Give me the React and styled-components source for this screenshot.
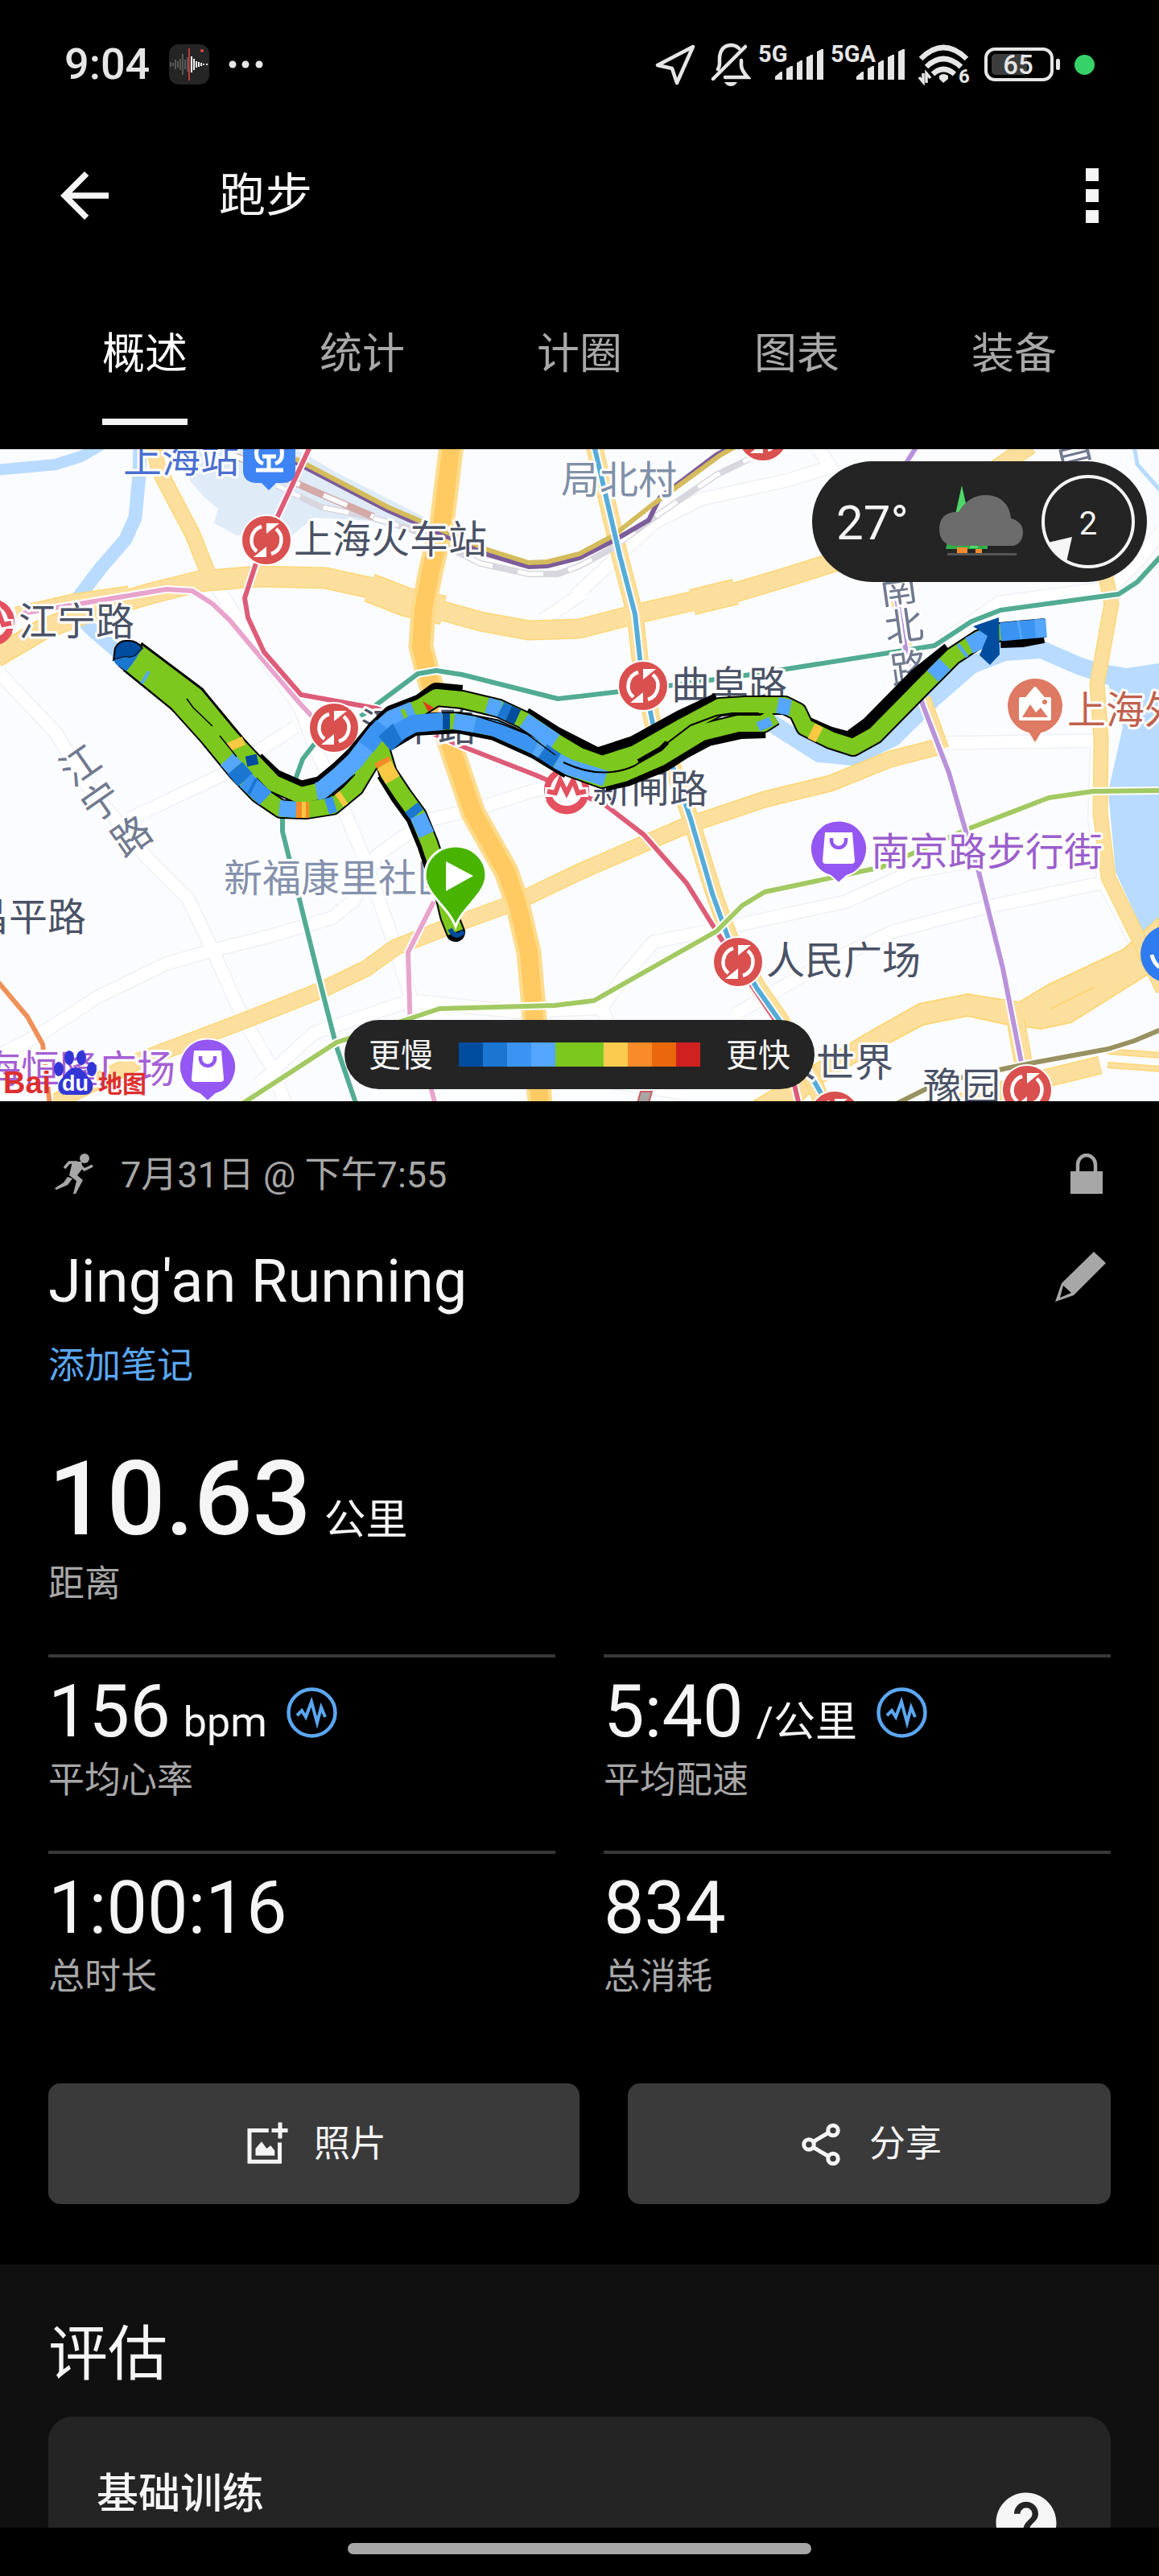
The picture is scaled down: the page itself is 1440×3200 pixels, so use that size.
import React, { useState } from 'react'
import styled, { createGlobalStyle } from 'styled-components'
import { MdArrowBack, MdHelp } from 'react-icons/md'

const GlobalStyle = createGlobalStyle`
  * {
    box-sizing: border-box;
  }
  body {
    margin: 0;
    background: #000;
    color: #f5f5f5;
    font-family: Roboto, 'Noto Sans CJK SC', sans-serif;
  }
  button {
    border: none;
    background: none;
    color: inherit;
    font: inherit;
    padding: 0;
    cursor: pointer;
  }
  svg {
    display: block;
    flex-shrink: 0;
  }
`;

const Screen = styled.div`
  height: 100vh;
  display: flex;
  flex-direction: column;
  background: #000;
`;

const Content = styled.main`
  flex: 1;
  min-height: 0;
  overflow-y: auto;
  scrollbar-width: none;
`;

/* status bar */

const StatusBar = styled.div`
  height: 160px;
  flex-shrink: 0;
  display: flex;
  align-items: center;
  justify-content: space-between;
  padding: 0 80px;
  color: #e6e6e6;
`;

const StatusGroup = styled.div`
  display: flex;
  align-items: center;
  gap: ${({ $gap }) => $gap}px;
`;

const Clock = styled.span`
  font-size: 54px;
  font-weight: 500;
  line-height: 60px;
`;

/* header */

const Header = styled.header`
  height: 166px;
  flex-shrink: 0;
  display: flex;
  align-items: center;
  padding: 0 60px;
`;

const HeaderTitle = styled.h1`
  flex: 1;
  margin: 0 0 0 122px;
  font-size: 58px;
  font-weight: 400;
  line-height: 70px;
`;

const IconButton = styled.button`
  display: flex;
  align-items: center;
  justify-content: center;
`;

const Tabs = styled.nav`
  display: flex;
  justify-content: space-around;
  flex-shrink: 0;
  padding: 0 45px 30px;
`;

const Tab = styled.button`
  height: 202px;
  padding-top: 34px;
  font-size: 53px;
  line-height: 60px;
  color: ${({ $active }) => ($active ? '#fff' : '#a8a8a8')};
  border-bottom: 8px solid ${({ $active }) => ($active ? '#f5f5f5' : 'transparent')};
`;

/* map */

const MapWrap = styled.section`
  position: relative;
  overflow: hidden;
`;

const MapSvg = styled.svg`
  width: 100%;
  height: auto;
  background: #fafcff;
`;

const MapText = styled.text`
  font-family: 'Noto Sans CJK SC', sans-serif;
  font-size: 48px;
  font-weight: 400;
  fill: ${({ $color }) => $color};
  stroke: #fff;
  stroke-width: 6px;
  stroke-linejoin: round;
  paint-order: stroke;
`;

const LogoText = styled.text`
  font-family: 'Liberation Sans', 'Noto Sans CJK SC', sans-serif;
  font-weight: 700;
  font-size: ${({ $size }) => $size}px;
  fill: ${({ $color }) => $color};
`;

const Weather = styled.div`
  position: absolute;
  top: 15px;
  right: 15px;
  height: 150px;
  display: flex;
  align-items: center;
  padding: 0 15px 0 30px;
  border-radius: 75px;
  background: #242424;
`;

const Temperature = styled.span`
  width: 128px;
  padding-top: 4px;
  font-size: 60px;
  line-height: 70px;
`;

const WindText = styled.text`
  font-size: 40px;
  fill: #f5f5f5;
`;

const Legend = styled.div`
  position: absolute;
  bottom: 15px;
  left: 50%;
  transform: translateX(-50%);
  height: 86px;
  display: flex;
  align-items: center;
  gap: 32px;
  padding: 0 30px;
  border-radius: 43px;
  background: #242424;
  font-size: 40px;
  line-height: 50px;
  white-space: nowrap;
`;

const LegendLabel = styled.span`
  padding-top: 4px;
`;

const LegendBar = styled.div`
  display: flex;
`;

const LegendCell = styled.span`
  width: 30px;
  height: 30px;
  background: ${({ $color }) => $color};
`;

/* activity */

const Activity = styled.section`
  padding: 60px 60px 75px;
`;

const Row = styled.div`
  display: flex;
  align-items: center;
  justify-content: space-between;
`;

const Meta = styled(Row)`
  height: 60px;
  padding: 0 10px 0 8px;
  color: #a7a7a7;
`;

const DateText = styled.span`
  flex: 1;
  margin-left: 34px;
  padding-top: 4px;
  font-size: 45px;
  line-height: 60px;
`;

const Name = styled.h2`
  margin: 0;
  padding-top: 2px;
  font-size: 74px;
  font-weight: 400;
  line-height: 88px;
`;

const NameRow = styled(Row)`
  align-items: flex-start;
  margin-top: 58px;
  padding-right: 6px;
`;

const EditButton = styled(IconButton)`
  height: 80px;
`;

const NoteLink = styled.a`
  display: block;
  margin-top: 31px;
  width: fit-content;
  font-size: 45px;
  line-height: 60px;
  color: #5ba7f2;
  text-decoration: none;
`;

const Distance = styled.div`
  margin: 60px 0 58px;
`;

const Figures = styled.div`
  display: flex;
  align-items: baseline;
  gap: 16px;
`;

const Value = styled.span`
  font-size: ${({ $big }) => ($big ? 128 : 90)}px;
  line-height: ${({ $big }) => ($big ? 150 : 108)}px;
  font-weight: ${({ $big }) => ($big ? 500 : 400)};
`;

const Unit = styled.span`
  font-size: 52px;
  line-height: 60px;
`;

const Label = styled.div`
  padding-top: 2px;
  font-size: 45px;
  line-height: 58px;
  color: #a7a7a7;
`;

const Stats = styled.div`
  display: grid;
  grid-template-columns: 1fr 1fr;
  gap: 58px 60px;
`;

const Stat = styled.div`
  border-top: 4px solid #383838;
  padding-top: 14px;
`;

const StatTop = styled.div`
  display: flex;
  align-items: center;
  gap: 24px;
`;

const Actions = styled.div`
  display: grid;
  grid-template-columns: 11fr 10fr;
  gap: 60px;
  margin-top: 103px;
`;

const ActionButton = styled.button`
  height: 150px;
  display: flex;
  align-items: center;
  justify-content: center;
  gap: 30px;
  padding-top: 2px;
  border-radius: 15px;
  background: #3a3a3a;
  font-size: 45px;
  line-height: 60px;
`;

/* evaluation */

const Evaluation = styled.section`
  padding: 67px 60px 60px;
  background: #101010;
`;

const SectionTitle = styled.h2`
  margin: 0 0 32px;
  font-size: 74px;
  font-weight: 400;
  line-height: 90px;
`;

const Card = styled.div`
  min-height: 264px;
  display: flex;
  align-items: center;
  justify-content: space-between;
  padding: 62px 60px;
  border-radius: 30px;
  background: #242424;
`;

const CardTitle = styled.h3`
  align-self: flex-start;
  margin: 0;
  font-size: 52px;
  font-weight: 500;
  line-height: 70px;
`;

const GestureBar = styled.footer`
  height: 60px;
  flex-shrink: 0;
  display: flex;
  align-items: center;
  justify-content: center;
  padding-bottom: 8px;
  background: #000;
`;

const Handle = styled.span`
  width: 40%;
  height: 14px;
  border-radius: 7px;
  background: #a7a7a7;
`;

const tabs = ['概述', '统计', '计圈', '图表', '装备'];

const DARK = '#004c9e';
const DEEP = '#1b76d2';
const MID = '#3b94f2';
const SKY = '#54a6ff';
const GREEN = '#7dc81e';
const YELLOW = '#fbc844';
const ORANGE = '#f98b28';

const paceColors = [DARK, DEEP, MID, SKY, GREEN, GREEN, '#fbcb50', ORANGE, '#ea670c', '#d02020'];

const stats = [
  { id: 1, value: '156', unit: 'bpm', label: '平均心率', chart: true },
  { id: 2, value: '5:40', unit: '/公里', label: '平均配速', chart: true },
  { id: 3, value: '1:00:16', label: '总时长' },
  { id: 4, value: '834', label: '总消耗' },
];

// map geometry, 1440 x 810
const streets = [
  '0,279 69,352 110,419 184,509 234,559 264,622 303,709 340,772 355,815',
  '271,174 321,249 372,319 395,379 422,435 450,502 482,592 510,679 516,720',
  '724,411 660,425 597,445 528,462 468,505 440,560 413,582 335,605 266,622 207,639 124,679 46,729 -5,755',
  '161,459 275,405 367,345',
  '320,790 390,725 510,685 643,699 748,694 775,655 812,612 913,592 1051,562 1133,525 1225,509',
  '913,702 1018,642 1110,599 1225,569 1367,539',
  '1170,365 1363,362 1360,459 1372,539 1409,609',
  '715,182 812,92 871,62 977,39 1032,22 1014,-5',
  '675,212 725,178',
  '1170,240 1243,190 1381,172 1413,140 1445,100',
  '748,694 765,740',
  '720,780 850,800',
];

const roads = [
  { w: 17, d: '190,-5 197,25 220,69 239,105 259,155' },
  { w: 24, d: '-5,258 51,225 110,202 188,179 248,164 321,158 404,160 459,172 505,194' },
  { w: 12, d: '20,203 90,187 160,177' },
  { w: 34, d: '459,172 505,190 551,200' },
  { w: 22, d: '540,198 597,214 657,225 720,223 793,204 881,184 917,177 977,159 1050,136' },
  { w: 30, d: '860,190 914,177' },
  { w: 20, d: '1230,30 1280,-5' },
  { w: 18, d: '60,815 174,759 298,712 399,672 455,645 491,619 560,592 643,562 720,525 849,469 950,435 1032,415 1106,385 1165,370' },
  { w: 16, d: '1372,150 1381,192 1372,242 1363,292 1368,359 1367,452 1377,532 1413,605 1445,672' },
  { w: 20, d: '1262,710 1272,765' },
  { w: 12, d: '1149,309 1172,372' },
  { w: 20, d: '1367,765 1285,785 1180,815' },
  { w: 5, d: '1376,748 1445,753' },
  { w: 5, d: '1376,765 1445,770' },
  { w: 18, d: '738,-5 770,132 789,205 796,269 812,345 835,392 858,459 887,552 906,605 942,669 970,709 1014,792 1022,815' },
  { w: 10, d: '1113,185 1128,252' },
];

const metro = [
  { c: '#52ab93', d: '448,332 519,279 542,275 574,280 693,310 720,307 830,294 940,279 1161,244 1207,214 1243,200 1390,180 1413,165 1445,130' },
  { c: '#52ab93', d: '415,345 390,367 376,385 351,455 351,475 367,539 395,652 418,742 443,815' },
  { c: '#e8a4cd', d: '28,204 207,174 239,176 264,192 285,212 321,255 372,315 395,340' },
  { c: '#e8a4cd', d: '539,562 507,625 510,725' },
  { c: '#e8a4cd', d: '532,780 541,815' },
  { c: '#dd5c78', d: '386,-5 347,79 317,145 304,185 308,209 328,252 374,305 468,322 528,349 574,369 666,405 752,442 800,479 853,539 894,605 936,669 963,709 980,760 993,815' },
  { c: '#55acd8', d: '738,-5 770,132 789,205 796,269 812,345 835,392 858,459 885,552 904,605 940,669 968,709 1020,800' },
  { c: '#a2c962', d: '298,815 418,737 510,707 546,695 689,691 738,685 890,599 922,567 950,550 1096,519 1202,472 1303,433 1358,425 1445,424' },
  { c: '#b992db', d: '1140,-5 1124,20' },
  { c: '#b992db', d: '1113,180 1126,252 1147,319 1179,402 1200,475 1216,525 1246,645 1269,762' },
  { c: '#ee9058', d: '-3,661 34,705 53,739 62,815' },
  { c: '#989262', d: '1110,815 1152,794 1188,782 1285,762 1377,745 1409,735 1445,720' },
];

const laneNorth = '161,251 202,278 239,307 275,347 317,391 340,415 374,430 399,424 422,405 441,387 468,352 487,335 523,320 542,308 574,311 620,322 652,337 690,363 720,381 748,391 789,378 849,344 894,320 927,318 975,318 991,326 1000,345 1032,361 1060,370 1087,355 1147,294 1184,257 1216,236 1243,227 1299,222';
const laneSouth = '154,260 220,314 257,355 294,400 321,428 349,447 381,448 413,443 441,420 468,375 482,359 514,340 569,338 615,347 666,370 707,395 748,410 775,403 821,383 872,352 917,341 948,341 962,332';
const laneSpur = '473,372 482,402 500,429 519,455 533,489 545,525 558,580 566,600';
const westBand = '157,275 225,330 281,389 302,414 338,402 302,362 250,299 177,244';

const paces = [
  { c: SKY, w: 4, d: '185,276 176,291' },
  { c: YELLOW, d: '284,370 303,362', w: 11 },
  { c: SKY, d: '282,385 292,396', w: 22 },
  { c: DEEP, d: '292,396 305,411', w: 24 },
  { c: MID, d: '305,411 330,434', w: 22 },
  { c: DEEP, w: 4, d: '318,410 309,428' },
  { c: DARK, d: '306,388 320,385', w: 13 },
  { c: SKY, d: '347,446 368,448' },
  { c: ORANGE, d: '368,448 375,448' },
  { c: YELLOW, d: '375,448 380,448' },
  { c: ORANGE, d: '380,448 384,448' },
  { c: MID, d: '406,444 416,441' },
  { c: YELLOW, d: '421,436 427,432' },
  { c: SKY, d: '393,425 399,424 422,405 441,387 468,352 487,335 514,324', w: 22 },
  { c: MID, d: '455,370 476,343', w: 22 },
  { c: GREEN, w: 5, d: '500,323 508,342' },
  { c: DEEP, d: '478,366 496,350', w: 24 },
  { c: MID, d: '494,352 514,341 550,338', w: 22 },
  { c: SKY, d: '605,318 622,323' },
  { c: DEEP, d: '622,323 632,328' },
  { c: DARK, d: '632,328 643,333' },
  { c: SKY, d: '651,337 690,363' },
  { c: DARK, d: '550,338 559,338' },
  { c: SKY, d: '564,338 590,342' },
  { c: MID, d: '590,342 615,347 666,370' },
  { c: SKY, d: '666,370 674,375' },
  { c: DEEP, d: '674,375 692,387' },
  { c: SKY, d: '692,387 707,395 752,409' },
  { c: SKY, d: '966,318 982,321' },
  { c: SKY, d: '942,345 958,338', w: 12 },
  { c: YELLOW, d: '1008,350 1018,355' },
  { c: SKY, d: '1159,282 1174,267' },
  { c: SKY, w: 4, d: '1190,242 1202,258' },
  { c: SKY, d: '1204,244 1228,232', w: 22 },
  { c: MID, w: 23, d: '1243,227 1299,222' },
  { c: SKY, w: 23, d: '1286,223 1300,222' },
  { c: SKY, w: 3, d: '1265,213 1269,236' },
  { c: ORANGE, d: '474,386 477,392' },
  { c: YELLOW, d: '477,392 488,411' },
  { c: DEEP, d: '511,445 518,454' },
  { c: SKY, d: '519,455 530,479' },
];

const labels = [
  { t: '上海站', x: 153, y: 29, c: '#4a6fd0' },
  { t: '上海火车站', x: 365, y: 129, c: '#4a5266' },
  { t: '局北村', x: 697, y: 55, c: '#8090a8' },
  { t: '江宁路', x: 23, y: 231, c: '#4a5266' },
  { t: '曲阜路', x: 834, y: 310, c: '#4a5266' },
  { t: '汉中路', x: 448, y: 362, c: '#4a5266' },
  { t: '新闸路', x: 736, y: 439, c: '#4a5266' },
  { t: '新福康里社区', x: 278, y: 550, c: '#8591ad' },
  { t: '昌平路', x: -37, y: 598, c: '#4a5266' },
  { t: '人民广场', x: 952, y: 652, c: '#4a5266' },
  { t: '大世界', x: 966, y: 779, c: '#4a5266' },
  { t: '豫园', x: 1147, y: 809, c: '#4a5266' },
  { t: '南京路步行街', x: 1082, y: 517, c: '#9b5fcc' },
  { t: '上海外滩', x: 1326, y: 341, c: '#c0614f' },
  { t: '上海恒隆广场', x: -70, y: 787, c: '#a55fd3' },
];

const streetLabels = [
  { t: '江', x: 99, y: 392, r: -35 },
  { t: '宁', x: 125, y: 437, r: -35 },
  { t: '路', x: 163, y: 480, r: -35 },
  { t: '南', x: 1116, y: 172, r: -8 },
  { t: '北', x: 1123, y: 219, r: -8 },
  { t: '路', x: 1130, y: 272, r: -8 },
  { t: '昌', x: 1333, y: -4, r: -14 },
];

const Interchange = ({ x, y }) => (
  <g transform={`translate(${x} ${y})`}>
    <circle r="31" fill="#d9504f" stroke="#fff" strokeWidth="2" />
    <path d="M-6-17A18 18 0 0 0-12 14M6 17A18 18 0 0 0 12-14" fill="none" stroke="#fff" strokeWidth="4.500" />
    <path d="M-16 21H0V8ZM16-21H0V-8Z" fill="#fff" />
  </g>
);

const MetroMark = ({ x, y }) => (
  <g transform={`translate(${x} ${y})`}>
    <circle r="28" fill="#e4505f" />
    <circle r="20" fill="#fff" />
    <path d="M-27 3H-15L-8-10 0 4 8-10 15 3H27" fill="none" stroke="#fff" strokeWidth="12" />
    <path d="M-24 2-14 4-8-12 0 4 8-12 14 4 24 2" fill="none" stroke="#e4505f" strokeWidth="6" />
    <path d="M-22 12A24 24 0 0 0 22 12" fill="none" stroke="#e4505f" strokeWidth="8" />
  </g>
);

const ShopPin = ({ x, y }) => (
  <g transform={`translate(${x} ${y})`}>
    <path d="M0 43-10 34A35 35 0 1 1 10 34Z" fill="#9457f2" stroke="#fff" strokeWidth="2" />
    <path d="M-17-20H17L20 15Q20 19 16 19H-16Q-20 19-20 15Z" fill="#fff" />
    <path d="M-9-13V-10A9 9 0 0 0 9-10V-13" fill="none" stroke="#9457f2" strokeWidth="4.500" />
  </g>
);

const RouteMap = () => (
  <MapSvg viewBox="0 0 1440 810" role="img" aria-label="路线">
    <path d="M232-1 236 39 253 59 271 74 266 92 294 107 363 107 390 85 459 89 537 112 542 92 418 29 367-1Z" fill="#dfebf7" />
    <g fill="none" stroke="#b8dbff">
      <path d="M-5 26 69 19 101 9 133-10" strokeWidth="14" />
      <path d="M174-5 173 32 168 85 156 112 124 149 99 182 95 205 115 225 150 255" strokeWidth="17" />
      <path d="M950 335 1018 378 1060 382 1110 358 1160 309 1207 268 1248 252 1294 249 1340 269 1400 289 1445 288" strokeWidth="22" />
      <path d="M1409-5 1413 19 1445 55" strokeWidth="5" />
    </g>
    <path d="M1340 262 1400 272 1440 266V582L1420 599 1386 525 1377 425 1395 345 1377 292Z" fill="#b8dbff" />

    {streets.map((d) => <polyline key={d} points={d} fill="none" stroke="#eff1f5" strokeWidth="18" />)}
    {streets.map((d) => <polyline key={d} points={d} fill="none" stroke="#fff" strokeWidth="15" />)}

    <path
      d="M936 810 1005 769 1078 725 1142 689 1202 677 1266 687 1303 665 1395 622 1440 582V645L1422 655 1331 712 1294 720 1248 714 1202 704 1147 715 1096 742 1018 789 995 810Z"
      fill="#fddf9d"
      stroke="#fbd778"
      strokeWidth="2"
    />
    <path d="M1306 695 1360 668" stroke="#fbd778" strokeWidth="2" />
    {roads.map(({ w, d }) => <polyline key={d} points={d} fill="none" stroke="#fbd778" strokeWidth={w + 3} strokeLinejoin="round" />)}
    {roads.map(({ w, d }) => <polyline key={d} points={d} fill="none" stroke="#fddf9d" strokeWidth={w} strokeLinejoin="round" />)}

    <g fill="none">
      <path d="M344 45 399 72 459 84 510 99 597 142 657 155 693 155 720 145 757 125 821 79 890 32 931 12" stroke="#d8d6de" strokeWidth="8" />
      <path d="M344 45 399 72 459 84 510 99 597 142 657 155 693 155 720 145 757 125 821 79 890 32 931 12" stroke="#fff" strokeWidth="5" strokeDasharray="32 32" />
      <path d="M285 5 390 52 464 84" stroke="#d3aaa8" strokeWidth="9" />
      <path d="M285 5 390 52 464 84" stroke="#fff" strokeWidth="6" strokeDasharray="32 32" />
      <path d="M561-5 549 92 535 152 526 199 523 245 533 285 546 325 562 375 588 452 629 525 643 565 657 625 663 692 671 815" stroke="#fddc8e" strokeWidth="31" />
      <path d="M561-5 549 92 535 152 526 199 523 245 533 285 546 325 562 375 588 452 629 525 643 565 657 625 663 692 671 815" stroke="#ffca62" strokeWidth="22" />
      <path d="M367 16 482 76 606 131 657 146 680 145 720 135 765 112 806 88 820 60 890 7 912-5" stroke="#7d5c9a" strokeWidth="6" />
      <path d="M367 12 482 72 606 125 657 141 680 140 720 130 761 108 812 68 894 8 917-5" stroke="#d4bb5c" strokeWidth="6" />
    </g>

    {metro.map(({ c, d }) => (
      <g key={d} fill="none" strokeLinejoin="round">
        <polyline points={d} stroke="#fff" strokeWidth="10" />
        <polyline points={d} stroke={c} strokeWidth="6" />
      </g>
    ))}

    {labels.map(({ t, x, y, c }) => (
      <MapText key={t} x={x} y={y} $color={c}>{t}</MapText>
    ))}
    {streetLabels.map(({ t, x, y, r }) => (
      <MapText key={`${t}${x}`} transform={`translate(${x} ${y}) rotate(${r})`} x="-24" y="18" $color="#717a90">{t}</MapText>
    ))}

    <Interchange x={331} y={113} />
    <Interchange x={415} y={346} />
    <Interchange x={799} y={294} />
    <Interchange x={917} y={637} />
    <Interchange x={1276} y={796} />
    <Interchange x={948} y={-16} />
    <Interchange x={1037} y={828} />
    <MetroMark x={704} y={423} />
    <MetroMark x={-10} y={214} />
    <ShopPin x={1042} y={496} />
    <ShopPin x={258} y={767} />

    <path d="M302-5V26Q302 41 318 42H325L334 51 343 42H352Q367 41 367 26V-5Z" fill="#3f84f5" />
    <path d="M320-4Q315 14 327 18M349-4Q354 14 342 18M318 26H352M334 8V26M326 9H343" fill="none" stroke="#fff" strokeWidth="5" />

    <path d="M1286 366 1278 353A35 35 0 1 1 1294 353Z" fill="#de7a63" stroke="#fff" strokeWidth="2" />
    <path d="M1268 310H1304V335H1268ZM1276 309 1286 297 1296 309" fill="#fff" stroke="#fff" strokeWidth="4" strokeLinejoin="round" />
    <path d="M1270 333 1280 317 1287 327 1293 321 1302 333Z" fill="#de7a63" />
    <circle cx="1298" cy="314" r="3" fill="#de7a63" />
    <circle cx="1453" cy="627" r="36" fill="#2f7bf0" />
    <path d="M1431 628Q1435 645 1450 646" fill="none" stroke="#fff" strokeWidth="5" />
    <path d="M796 798H810L806 812H792Z" fill="#a9a5a5" stroke="#c9605f" strokeWidth="2" />

    {/* track outline, then the pace colours on top */}
    <polygon points={westBand} stroke="#000" strokeWidth="6" />
    <g fill="none" stroke="#000" strokeWidth="24" strokeLinejoin="round">
      <polyline points={laneNorth} />
      <polyline points={laneSouth} />
      <polyline points={laneSpur} strokeLinecap="round" />
      <polyline points="482,400 500,429 519,455 533,489 545,525" transform="translate(-3 2)" />
      <polyline points="317,389 340,411 374,426 399,420 422,401 441,383 468,350 487,332 523,318 542,304 574,307" transform="translate(0 -2)" />
      <polyline points="652,335 690,359 743,386 789,371 849,338 894,317" transform="translate(-1 -3)" />
      <polyline points="1000,343 1032,357 1058,364 1084,345 1144,284 1184,252" transform="translate(-3 -1)" />
      <polyline points="1243,232 1270,231 1296,226" transform="translate(0 3)" />
      <polyline points="482,363 514,344 569,341 615,350 666,373 707,398" />
      <polyline points="748,412 775,406 821,388 846,372 876,356 917,347 948,346" transform="translate(3 1)" />
    </g>
    <g fill="none" stroke={GREEN} strokeWidth="20" strokeLinejoin="round">
      <polygon points={westBand} fill={GREEN} stroke="none" />
      <polyline points={laneSpur} />
      <polyline points={laneSouth} />
      <polyline points={laneNorth} />
    </g>
    {paces.map(({ c, d, w = 20 }) => (
      <polyline key={c + d} points={d} fill="none" stroke={c} strokeWidth={w} strokeLinejoin="round" />
    ))}
    <path d="M525 313 539 321 532 326Z" fill="#e43a1a" />
    <g fill="none" stroke="#000">
      <path d="M232 310 240 321 264 344M273 356 294 382M413 431 426 420 441 404M564 327 590 331 625 342 655 354 690 380" strokeWidth="1.500" />
      <path d="M700 389Q748 412 789 393L829 365 858 343 890 331 910 328 943 328" strokeWidth="2" />
      <path d="M793 388 821 372 829 364" strokeWidth="6" />
    </g>
    <path d="M141 262 143 247Q148 237 158 238 170 237 177 247L168 257 161 259 155 258Z" fill={DARK} stroke="#000" strokeWidth="2" />
    <path d="M141 262 155 258 161 259 168 257 175 249 178 246 165 266 157 276 144 267Z" fill={DEEP} />
    <path d="M1209 220 1241 209 1242 255 1230 268 1217 256 1227 232Z" fill={DARK} />
    <path d="M559 596Q566 610 576 599" fill="none" stroke={DARK} strokeWidth="6" />

    <path d="M566 593C558 569 528 553 528 529A38 36 0 0 1 604 529C604 553 574 569 566 593Z" fill="#48b300" stroke="#fff" strokeWidth="3" />
    <path d="M554 512 588 530 554 549Z" fill="#fff" />

    <LogoText x="4" y="800" $size={38} $color="#dd2f2f">Bai</LogoText>
    <g fill="#3336d6">
      <ellipse cx="73" cy="770" rx="6" ry="9" />
      <ellipse cx="86" cy="756" rx="6" ry="9" />
      <ellipse cx="101" cy="756" rx="6" ry="9" />
      <ellipse cx="114" cy="770" rx="6" ry="9" />
      <path d="M94 768C104 768 107 778 113 784 118 791 115 802 105 802H82C72 802 70 791 75 784 81 778 84 768 94 768Z" />
    </g>
    <LogoText x="77" y="797" $size={27} $color="#fff">du</LogoText>
    <LogoText x="122" y="799" $size={30} $color="#dd2f2f">地图</LogoText>
  </MapSvg>
);

const WeatherIcon = () => (
  <svg width="104" height="90" viewBox="0 0 104 90">
    <path d="M28 0 36 36 20 36Z" fill="#4fd868" />
    <path d="M10 71H60V79H8Z" fill="#2fae4a" />
    <path d="M38 72H48V78H38Z" fill="#4fd868" />
    <path d="M22 77H35V84H22ZM45 79H53V84H45Z" fill="#f68a2f" />
    <path d="M10 84H96V87H10Z" fill="#555" />
    <path d="M18 75C6 74 0 66 0 54 0 40 9 32 24 33 32 20 42 12 58 12 76 12 88 24 89 41 98 43 104 49 104 58 104 68 98 75 90 75Z" fill="#6c6c6c" />
  </svg>
);

const WindDial = () => (
  <svg width="116" height="116" viewBox="0 0 116 116">
    <circle cx="58" cy="58" r="56" fill="none" stroke="#f5f5f5" strokeWidth="4" />
    <path d="M8 84 38 77 31 108Q16 99 8 84Z" fill="#f5f5f5" />
    <WindText x="58" y="74" textAnchor="middle">2</WindText>
  </svg>
);

const RecorderIcon = () => (
  <svg width="50" height="50" viewBox="0 0 50 50">
    <rect width="50" height="50" rx="12" fill="#252525" />
    <path d="M2 22V28M5 23V27M8 19V31M11 21V29M14 18V32M17 12V38M20 19V31M23 16V34" stroke="#8c8c8c" strokeWidth="1" />
    <path d="M28 15V35M31 18V32M34 21V29M37 22V28M40 23V27M43 24V26M47 24V26" stroke="#f2f2f2" strokeWidth="2" />
    <path d="M25 5V45" stroke="#e8463f" strokeWidth="1.500" />
    <circle cx="41" cy="8" r="2" fill="#e8463f" />
  </svg>
);

const SignalIcon = ({ text, width }) => (
  <svg width={width} height="52" viewBox={`0 0 ${width} 52`} fill="currentColor">
    <text x="0" y="23" fontSize="29" fontWeight="700">{text}</text>
    <g transform={`translate(${width - 60} 0)`}>
      <path d="M0 45V41L7 35H9V45ZM14 45V31L20 28H22V45ZM27 45V24L32 21H34V45ZM39 45V17L45 14H47V45ZM52 45V10L58 7H60V45Z" />
    </g>
  </svg>
);

const StatusIcons = () => (
  <StatusGroup $gap={9}>
    <StatusGroup $gap={19}>
      <svg width="50" height="52" viewBox="0 0 50 52" fill="none" stroke="currentColor" strokeWidth="4.500" strokeLinejoin="round">
        <path d="M47 4 3 27 21 31 27 49Z" />
      </svg>
      <svg width="50" height="54" viewBox="0 0 50 54" fill="none" stroke="currentColor" strokeWidth="4.500" strokeLinecap="round">
        <path d="M3 45 43 5M9 33Q11 30 11 26V19Q12 4 25 3 31 3 35 7M38 22V28Q38 34 46 43H18" />
        <path d="M17 49H33Q30 54 25 54T17 49Z" fill="currentColor" stroke="none" />
      </svg>
    </StatusGroup>
    <SignalIcon text="5G" width={81} />
    <SignalIcon text="5GA" width={92} />
    <StatusGroup $gap={18}>
      <svg width="72" height="52" viewBox="-8 0 72 52" fill="none" stroke="currentColor">
        <path d="M3 19Q31-9 60 19M10 29Q31 9 53 29M18 38Q31 26 45 38" strokeWidth="6.500" />
        <path d="M26 40Q31 36 37 40V44L31 49 26 44Z" fill="currentColor" stroke="none" />
        <path d="M1 42 6 48V37M15 43 10 37V49" strokeWidth="3.500" />
        <text x="50" y="49" fontSize="24" fontWeight="700" fill="currentColor" stroke="none">6</text>
      </svg>
      <svg width="94" height="42" viewBox="0 0 94 42">
        <rect x="2" y="2" width="82" height="38" rx="11" fill="none" stroke="currentColor" strokeWidth="4" />
        <rect x="9" y="8" width="44" height="26" rx="5" fill="#3d3d3d" />
        <rect x="89" y="14" width="5" height="14" rx="2" fill="currentColor" />
        <text x="42" y="33" fontSize="33" fontWeight="500" textAnchor="middle" fill="currentColor">65</text>
      </svg>
      <svg width="25" height="25" viewBox="0 0 25 25">
        <circle cx="12.500" cy="12.500" r="12.500" fill="#37d267" />
      </svg>
    </StatusGroup>
  </StatusGroup>
);

const RunnerIcon = () => (
  <svg width="48" height="50" viewBox="0 0 48 50" fill="none" stroke="currentColor">
    <circle cx="37" cy="6" r="6" fill="currentColor" stroke="none" />
    <path d="M12 18 18 11 28 11M29 13 37 20 47 15" strokeWidth="3.500" />
    <path d="M22 10 33 10 35 18 28 27 35 33 26 50H23L27 34 18 27Z" fill="currentColor" stroke="none" />
    <path d="M16 29 22 31 16 39 2 45 0 43 11 36Z" fill="currentColor" stroke="none" />
  </svg>
);

const LockIcon = () => (
  <svg width="40" height="50" viewBox="0 0 40 50">
    <path d="M9 24V14A11 12 0 0 1 31 14V24" fill="none" stroke="currentColor" strokeWidth="4.500" />
    <path d="M0 22H40V50H0Z" fill="currentColor" />
  </svg>
);

const PencilIcon = () => (
  <svg width="63" height="63" viewBox="0 0 63 63">
    <path fillRule="evenodd" d="M0 62 8 39 48 0 63 14 23 54ZM10 42 6 57 20 51Z" fill="#a7a7a7" />
  </svg>
);

const PulseIcon = () => (
  <svg width="63" height="63" viewBox="0 0 63 63" fill="none" stroke="#5ba7f2">
    <circle cx="31.500" cy="31.500" r="29" strokeWidth="4.500" />
    <path d="M13 35 19 29 24 37 31 18 38 44 43 25 48 37" strokeWidth="4" />
  </svg>
);

const PhotoIcon = () => (
  <svg width="60" height="60" viewBox="0 0 24 24" fill="none" stroke="currentColor" strokeWidth="2">
    <path d="M13.500 5H4V20.500H19V11M15 5H23M19.200 1V9" />
    <path d="M7 17.500V14L10 10.500 12.500 14 14.500 12.500 16.500 15V17.500Z" fill="currentColor" stroke="none" />
  </svg>
);

const ShareIcon = () => (
  <svg width="60" height="60" viewBox="0 0 24 24" fill="none" stroke="currentColor" strokeWidth="2">
    <circle cx="18" cy="5" r="2.500" />
    <circle cx="6" cy="12" r="2.500" />
    <circle cx="18" cy="19" r="2.500" />
    <path d="M8 10.700 16 6M8 13.300 16 18" />
  </svg>
);

const App = () => {
  const [active, setActive] = useState('概述');

  return (
    <>
      <GlobalStyle />
      <Screen>
        <StatusBar>
          <StatusGroup $gap={24}>
            <Clock>9:04</Clock>
            <RecorderIcon />
            <svg width="46" height="10" viewBox="0 0 46 10" fill="currentColor">
              <circle cx="5" cy="5" r="4.500" />
              <circle cx="21" cy="5" r="4.500" />
              <circle cx="38" cy="5" r="4.500" />
            </svg>
          </StatusGroup>
          <StatusIcons />
        </StatusBar>
        <Header>
          <IconButton aria-label="返回">
            <MdArrowBack size={90} />
          </IconButton>
          <HeaderTitle>跑步</HeaderTitle>
          <IconButton aria-label="更多">
            <svg width="46" height="68" viewBox="0 0 46 68" fill="currentColor">
              <path d="M15 0H31V16H15ZM15 26H31V42H15ZM15 52H31V68H15Z" />
            </svg>
          </IconButton>
        </Header>
        <Tabs>
          {tabs.map((tab) => (
            <Tab key={tab} $active={tab === active} onClick={() => setActive(tab)}>{tab}</Tab>
          ))}
        </Tabs>
        <Content>
          <MapWrap>
            <RouteMap />
            <Weather>
              <Temperature>27°</Temperature>
              <StatusGroup $gap={23}>
                <WeatherIcon />
                <WindDial />
              </StatusGroup>
            </Weather>
            <Legend>
              <LegendLabel>更慢</LegendLabel>
              <LegendBar>
                {paceColors.map((color, i) => <LegendCell key={i} $color={color} />)}
              </LegendBar>
              <LegendLabel>更快</LegendLabel>
            </Legend>
          </MapWrap>
          <Activity>
            <Meta>
              <RunnerIcon />
              <DateText>7月31日 @ 下午7:55</DateText>
              <LockIcon />
            </Meta>
            <NameRow>
              <Name>Jing'an Running</Name>
              <EditButton aria-label="编辑">
                <PencilIcon />
              </EditButton>
            </NameRow>
            <NoteLink href="#note">添加笔记</NoteLink>
            <Distance>
              <Figures>
                <Value $big>10.63</Value>
                <Unit>公里</Unit>
              </Figures>
              <Label>距离</Label>
            </Distance>
            <Stats>
              {stats.map((stat) => (
                <Stat key={stat.id}>
                  <StatTop>
                    <Figures>
                      <Value>{stat.value}</Value>
                      {stat.unit && <Unit>{stat.unit}</Unit>}
                    </Figures>
                    {stat.chart && <PulseIcon />}
                  </StatTop>
                  <Label>{stat.label}</Label>
                </Stat>
              ))}
            </Stats>
            <Actions>
              <ActionButton><PhotoIcon />照片</ActionButton>
              <ActionButton><ShareIcon />分享</ActionButton>
            </Actions>
          </Activity>
          <Evaluation>
            <SectionTitle>评估</SectionTitle>
            <Card>
              <CardTitle>基础训练</CardTitle>
              <IconButton aria-label="帮助">
                <MdHelp size={90} />
              </IconButton>
            </Card>
          </Evaluation>
        </Content>
        <GestureBar>
          <Handle />
        </GestureBar>
      </Screen>
    </>
  );
}

export default App
